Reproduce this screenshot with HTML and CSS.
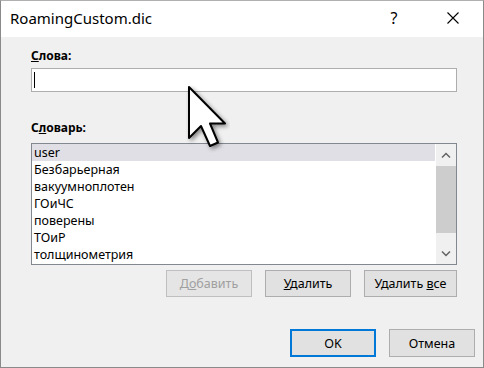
FILE: index.html
```html
<!DOCTYPE html>
<html lang="ru">
<head>
  <meta charset="UTF-8" />
  <title>RoamingCustom.dic</title>
  <link rel="stylesheet" href="styles.css">
</head>
<body>

  <div class="janela">
    <!-- Barra de título -->
    <div class="titulo">
      <span class="titulo-texto">RoamingCustom.dic</span>
      <span class="titulo-ajuda">?</span>
      <span class="titulo-fechar">
        <svg width="12" height="12" viewBox="0 0 12 12">
          <path d="M0.5 0.5 L11.5 11.5 M11.5 0.5 L0.5 11.5" stroke="#000" stroke-width="1.1" fill="none" />
        </svg>
      </span>
    </div>

    <div class="conteudo">
      <div class="secao">
        <div class="rotulo"><u>С</u>лова:</div>
        <div class="campo"><span class="caret"></span></div>

        <div class="rotulo rotulo-lista">С<u>л</u>оварь:</div>
        <div class="lista">
          <div class="itens">
            <div class="item selecionado">user</div>
            <div class="item">Безбарьерная</div>
            <div class="item">вакуумноплотен</div>
            <div class="item">ГОиЧС</div>
            <div class="item">поверены</div>
            <div class="item">ТОиР</div>
            <div class="item">толщинометрия</div>
          </div>
          <div class="rolagem">
            <div class="seta">
              <svg width="10" height="6" viewBox="0 0 10 6"><path d="M1 5.5 L5 1.5 L9 5.5" stroke="#606060" stroke-width="1.4" fill="none" /></svg>
            </div>
            <div class="trilho"><div class="polegar"></div></div>
            <div class="seta">
              <svg width="10" height="6" viewBox="0 0 10 6"><path d="M1 0.5 L5 4.5 L9 0.5" stroke="#606060" stroke-width="1.4" fill="none" /></svg>
            </div>
          </div>
        </div>

        <div class="acoes">
          <button class="botao desativado">Д<u>о</u>бавить</button>
          <button class="botao"><u>У</u>далить</button>
          <button class="botao botao-largo">Удалить <u>в</u>се</button>
        </div>
      </div>

      <div class="rodape">
        <button class="botao botao-ok">OK</button>
        <button class="botao">Отмена</button>
      </div>
    </div>

    <!-- Ponteiro do mouse -->
    <svg class="ponteiro" width="44" height="70" viewBox="0 0 44 70">
      <defs>
        <filter id="sombra" x="-30%" y="-30%" width="160%" height="160%">
          <feDropShadow dx="2" dy="2" stdDeviation="2" flood-color="#000" flood-opacity="0.45" />
        </filter>
      </defs>
      <path d="M3 2 L3 53 L15 41 L24 61 L32 57.5 L24 38.5 L39 38.5 Z" fill="#fff" stroke="#000" stroke-width="2" stroke-linejoin="round" filter="url(#sombra)" />
    </svg>
  </div>

</body>
</html>
```

FILE: styles.css
```css
body {
  margin: 0;
  background-color: #6b6b6b;
  font-family: "Segoe UI", "Noto Sans", Arial, sans-serif;
  color: #000;
}

.janela {
  position: relative;
  box-sizing: border-box;
  width: 484px;
  height: 368px;
  border: 1px solid #8a8a8a;
  border-top-color: #b0b0b0;
  background-color: #f0f0f0;
  overflow: hidden;
}

.titulo {
  display: flex;
  align-items: center;
  height: 36px;
  background-color: #fff;
}

.titulo-texto {
  flex: 1;
  padding-left: 9px;
  font-size: 15px;
  padding-bottom: 2px;
}

.titulo-ajuda {
  width: 58px;
  text-align: center;
  font-size: 16px;
  padding-bottom: 2px;
}

.titulo-fechar {
  display: flex;
  justify-content: center;
  width: 60px;
  padding-bottom: 2px;
}

.conteudo {
  padding: 0 8px 0 30px;
}

.secao {
  width: 426px;
}

.rotulo {
  margin-top: 11px;
  font-size: 12px;
  font-weight: bold;
  line-height: 16px;
}

.rotulo-lista {
  margin-top: 28px;
}

.campo {
  box-sizing: border-box;
  margin-top: 4px;
  height: 24px;
  border: 1px solid #adadad;
  background: #fff;
  padding: 3px 0 0 2px;
}

.caret {
  display: block;
  width: 1px;
  height: 16px;
  background: #000;
}

.lista {
  display: flex;
  box-sizing: border-box;
  margin-top: 7px;
  height: 122px;
  border: 1px solid #828790;
  background: #fff;
}

.itens {
  flex: 1;
}

.item {
  height: 17px;
  line-height: 17px;
  padding-left: 2px;
  font-size: 12.5px;
}

.selecionado {
  background-color: #e0dfe5;
}

.rolagem {
  display: flex;
  flex-direction: column;
  width: 20px;
  margin-left: 1px;
  background: #f0f0f0;
}

.seta {
  display: flex;
  justify-content: center;
  align-items: center;
  height: 21px;
}

.trilho {
  flex: 1;
  padding-top: 1px;
}

.polegar {
  height: 67px;
  background: #cdcdcd;
}

.acoes {
  display: flex;
  justify-content: flex-end;
  gap: 13px;
  margin-top: 5px;
}

.botao {
  box-sizing: border-box;
  width: 86px;
  height: 27px;
  border: 1px solid #adadad;
  background-color: #e1e1e1;
  font-family: "Segoe UI", "Noto Sans", Arial, sans-serif;
  font-size: 12.5px;
  color: #000;
  padding: 0;
}

.botao-largo {
  width: 93px;
}

.desativado {
  border-color: #bfbfbf;
  background-color: #e5e5e5;
  color: #a0a0a0;
}

.rodape {
  display: flex;
  justify-content: flex-end;
  gap: 13px;
  margin-top: 32px;
}

.rodape .botao {
  height: 28px;
}

.botao-ok {
  border: 2px solid #0078d7;
}

.ponteiro {
  position: absolute;
  left: 185px;
  top: 84px;
}
```
